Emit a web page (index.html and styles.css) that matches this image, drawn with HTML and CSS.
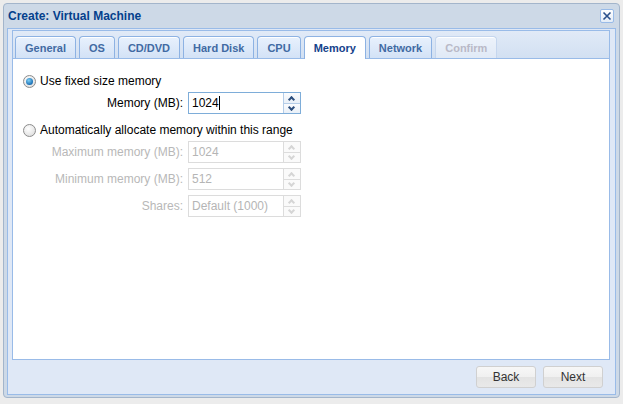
FILE: index.html
```html
<!DOCTYPE html>
<html>
<head>
<meta charset="utf-8">
<link rel="stylesheet" href="styles.css">
</head>
<body>
<div class="win">
  <div class="win-header">
    <span class="win-title">Create: Virtual Machine</span>
    <span class="win-close">
      <svg width="10" height="10" viewBox="0 0 10 10"><path d="M1.5 1.5 L8.5 8.5 M8.5 1.5 L1.5 8.5" stroke="#2a4f8a" stroke-width="1.6" fill="none"/></svg>
    </span>
  </div>
  <div class="win-body">
    <div class="tabpanel">
      <div class="tabbar">
        <div class="tab">General</div>
        <div class="tab">OS</div>
        <div class="tab">CD/DVD</div>
        <div class="tab">Hard Disk</div>
        <div class="tab">CPU</div>
        <div class="tab active">Memory</div>
        <div class="tab">Network</div>
        <div class="tab disabled">Confirm</div>
      </div>
      <div class="tabcontent">
        <div class="radio-row">
          <span class="radio checked"></span>
          <span class="radio-label">Use fixed size memory</span>
        </div>
        <div class="field-row">
          <span class="flabel">Memory (MB):</span>
          <div class="spinfield focus">
            <span class="fvalue">1024<span class="caret"></span></span>
            <span class="spin"><span class="spin-up"></span><span class="spin-down"></span></span>
          </div>
        </div>
        <div class="radio-row second">
          <span class="radio"></span>
          <span class="radio-label">Automatically allocate memory within this range</span>
        </div>
        <div class="field-row dis">
          <span class="flabel">Maximum memory (MB):</span>
          <div class="spinfield">
            <span class="fvalue">1024</span>
            <span class="spin"><span class="spin-up"></span><span class="spin-down"></span></span>
          </div>
        </div>
        <div class="field-row dis">
          <span class="flabel">Minimum memory (MB):</span>
          <div class="spinfield">
            <span class="fvalue">512</span>
            <span class="spin"><span class="spin-up"></span><span class="spin-down"></span></span>
          </div>
        </div>
        <div class="field-row dis">
          <span class="flabel">Shares:</span>
          <div class="spinfield">
            <span class="fvalue">Default (1000)</span>
            <span class="spin"><span class="spin-up"></span><span class="spin-down"></span></span>
          </div>
        </div>
      </div>
    </div>
    <div class="toolbar">
      <button class="btn">Back</button>
      <button class="btn">Next</button>
    </div>
  </div>
</div>
</body>
</html>
```

FILE: styles.css
```css
html, body {
  margin: 0;
  padding: 0;
}
body {
  background: #ececec;
  padding: 3px 3px 5px 3px;
  font-family: "Liberation Sans", Arial, sans-serif;
  font-size: 12px;
  color: #000;
  box-sizing: border-box;
  width: 623px;
  height: 404px;
}
.win {
  width: 617px;
  height: 395px;
  box-sizing: border-box;
  border: 1px solid #a3b5cb;
  border-radius: 4px;
  background: #cdd9e7;
  display: flex;
  flex-direction: column;
  padding: 0 3px 2px 3px;
}
.win-header {
  height: 24px;
  flex: none;
  display: flex;
  align-items: center;
  justify-content: space-between;
  padding: 0 2px 0 1px;
}
.win-title {
  font-weight: bold;
  font-size: 12px;
  color: #04408c;
}
.win-close {
  width: 12px;
  height: 12px;
  border: 1px solid #99bbe8;
  border-radius: 2px;
  background: linear-gradient(#ffffff, #e3ecf7);
  display: flex;
  align-items: center;
  justify-content: center;
}
.win-body {
  flex: 1;
  border: 1px solid #99bbe8;
  background: #dfe8f6;
  display: flex;
  flex-direction: column;
  padding: 1px 5px 0 4px;
}
.tabpanel {
  flex: 1;
  display: flex;
  flex-direction: column;
  border: 1px solid #99bbe8;
  border-bottom: none;
}
.tabbar {
  display: flex;
  gap: 3px;
  padding: 5px 0 0 2px;
  background: linear-gradient(#e1eaf7, #d2e0f2);
  border-bottom: 1px solid #99bbe8;
  height: 22px;
  flex: none;
}
.tab {
  height: 22px;
  box-sizing: border-box;
  padding: 0 9px;
  border: 1px solid #8db2e3;
  border-bottom: none;
  border-radius: 4px 4px 0 0;
  background: linear-gradient(#e8f1fd, #d3e2f6);
  font-weight: bold;
  font-size: 11px;
  color: #416aa3;
  display: flex;
  align-items: center;
  box-shadow: inset 0 1px 0 #ffffff;
}
.tab.active {
  background: #fff;
  color: #15428b;
  height: 23px;
  margin-bottom: -1px;
}
.tab.disabled {
  color: #b9b9c7;
  border-color: #c5d6ee;
  background: linear-gradient(#edf3fb, #e0e9f6);
}
.tabcontent {
  flex: 1;
  background: #fff;
  border-bottom: 1px solid #99bbe8;
  padding: 15px 10px 0 10px;
}
.radio-row {
  display: flex;
  align-items: center;
  height: 14px;
  margin-bottom: 4px;
}
.radio-row.second {
  margin-top: 9px;
  margin-bottom: 4px;
}
.radio {
  width: 11px;
  height: 11px;
  border-radius: 50%;
  border: 1px solid #8c8c8c;
  background: radial-gradient(circle at 40% 35%, #ffffff, #d8d8d8);
  margin-right: 4px;
  position: relative;
  flex: none;
}
.radio.checked::after {
  content: "";
  position: absolute;
  left: 2px;
  top: 2px;
  width: 7px;
  height: 7px;
  border-radius: 50%;
  background: radial-gradient(circle at 40% 35%, #7fd0f5, #1a6fb5 70%, #0d4f8f);
}
.radio-label {
  font-size: 12px;
  color: #000;
}
.field-row {
  display: flex;
  align-items: center;
  height: 22px;
  margin-bottom: 5px;
}
.flabel {
  width: 160px;
  text-align: right;
  padding-right: 5px;
  color: #000;
  font-size: 12px;
}
.dis .flabel {
  color: #b8b8b8;
}
.spinfield {
  display: flex;
  width: 113px;
  height: 22px;
  box-sizing: border-box;
  border: 1px solid #dcdcdc;
  background: #fff;
}
.spinfield.focus {
  border-color: #7eadd9;
}
.fvalue {
  flex: 1;
  padding-left: 3px;
  display: flex;
  align-items: center;
  font-size: 12px;
  color: #000;
}
.dis .fvalue {
  color: #b5b5b5;
}
.caret {
  display: inline-block;
  width: 1px;
  height: 14px;
  background: #000;
}
.spin {
  width: 16px;
  flex: none;
  display: flex;
  flex-direction: column;
  border-left: 1px solid #dcdcdc;
}
.focus .spin {
  border-left-color: #b5cde8;
}
.spin-up, .spin-down {
  flex: 1;
  position: relative;
  background: linear-gradient(#fbfcfe, #e9f0f8);
}
.dis .spin-up, .dis .spin-down {
  background: #fafafa;
}
.spin-up {
  border-bottom: 1px solid #dcdcdc;
}
.focus .spin-up {
  border-bottom-color: #b5cde8;
}
.spin-up::after, .spin-down::after {
  content: "";
  position: absolute;
  left: 5px;
  width: 5px;
  height: 5px;
  border-left: 2px solid #2d4f7e;
  border-top: 2px solid #2d4f7e;
  box-sizing: border-box;
}
.spin-up::after {
  top: 4px;
  transform: rotate(45deg);
}
.spin-down::after {
  top: 1px;
  transform: rotate(225deg);
}
.dis .spin-up::after, .dis .spin-down::after {
  border-color: #d5d5d5;
}
.toolbar {
  height: 34px;
  flex: none;
  display: flex;
  justify-content: flex-end;
  align-items: flex-start;
  gap: 7px;
  padding: 6px 7px 0 0;
  box-sizing: border-box;
}
.btn {
  width: 60px;
  height: 22px;
  border: 1px solid #d0d0d0;
  border-radius: 3px;
  background: linear-gradient(#f7f7f7 0%, #f0f0f0 50%, #e3e3e3 51%, #e9e9e9 100%);
  font-family: "Liberation Sans", Arial, sans-serif;
  font-size: 12px;
  color: #333;
  padding: 0;
}
```
